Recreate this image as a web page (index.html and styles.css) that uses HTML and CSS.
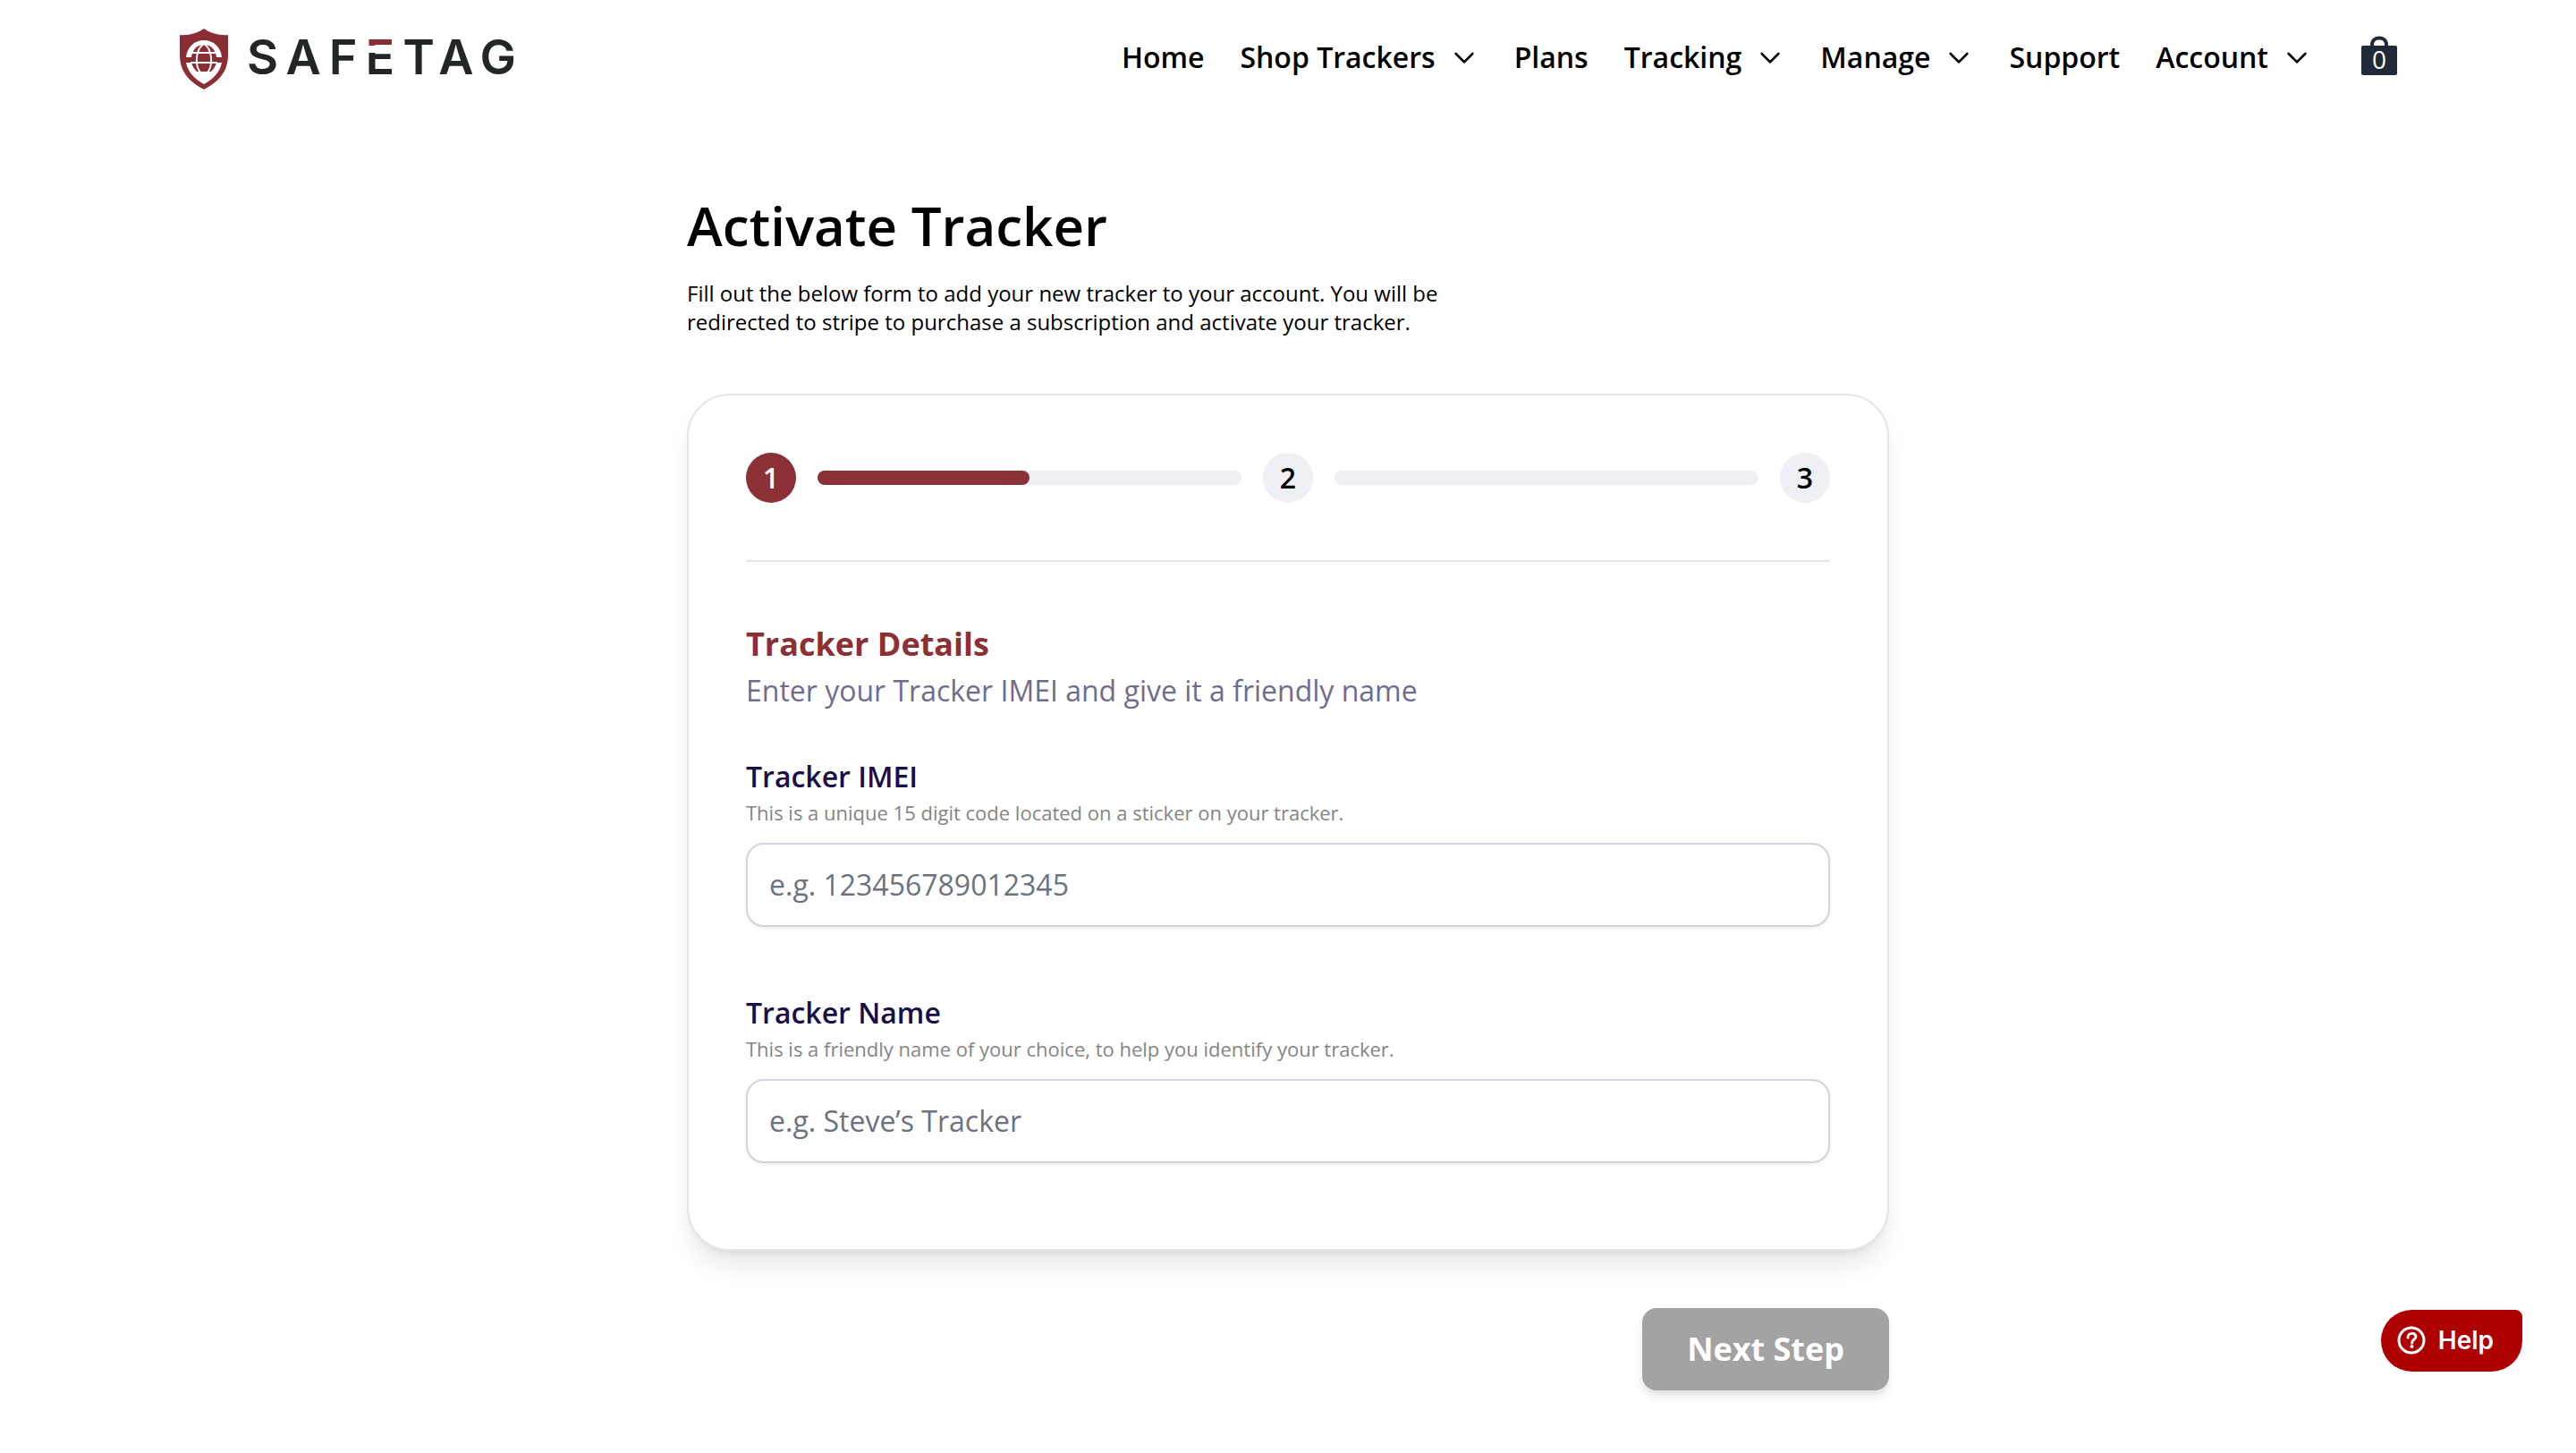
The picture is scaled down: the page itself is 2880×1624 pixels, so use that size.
FILE: index.html
```html
<!DOCTYPE html>
<html lang="en">
<head>
  <meta charset="utf-8">
  <meta name="viewport" content="width=device-width, initial-scale=1">
  <title>Activate Tracker | SafeTag</title>
  <link rel="stylesheet" href="styles.css">
</head>
<body>
  <header class="site-header">
    <a class="logo" href="/">
      <svg class="logo-mark" viewBox="0 0 54 72" aria-hidden="true">
        <path fill="#8b2e33" d="M27 4C20 9 9 12 0 11V33C0 52 10 63 27 72C44 63 54 52 54 33V11C45 12 34 9 27 4Z"/>
        <path fill="#fff" d="M7 36C8 25 16 17 27 17S46 25 47 36Z"/>
        <path fill="#fff" d="M7 42H47C45 52 38 60 27 66C16 60 9 52 7 42Z"/>
        <path fill="#8b2e33" d="M13 36C14 28 19 22 27 22S40 28 41 36V42C40 46 38 49 35 52H19C16 49 14 46 13 42Z"/>
        <path fill="none" stroke="#fff" stroke-width="2" d="M14 31H40M12 42H42M27 21C17 27 17 46 23 53M27 21C37 27 37 46 31 53"/>
      </svg>
      <span class="logo-text">SAF<span class="logo-accent">E</span>TAG</span>
    </a>
    <nav class="nav" aria-label="Main">
      <a class="nav-link" href="/">Home</a>
      <button class="nav-link" type="button">Shop Trackers<svg class="chevron" viewBox="0 0 24 24" aria-hidden="true"><path d="M19 9l-7 7-7-7"/></svg></button>
      <a class="nav-link" href="/plans">Plans</a>
      <button class="nav-link" type="button">Tracking<svg class="chevron" viewBox="0 0 24 24" aria-hidden="true"><path d="M19 9l-7 7-7-7"/></svg></button>
      <button class="nav-link" type="button">Manage<svg class="chevron" viewBox="0 0 24 24" aria-hidden="true"><path d="M19 9l-7 7-7-7"/></svg></button>
      <a class="nav-link" href="/support">Support</a>
      <button class="nav-link" type="button">Account<svg class="chevron" viewBox="0 0 24 24" aria-hidden="true"><path d="M19 9l-7 7-7-7"/></svg></button>
      <a class="cart" href="/cart" aria-label="Cart, 0 items">
        <svg class="cart-icon" viewBox="0 0 40 48" aria-hidden="true">
          <path fill="none" stroke="#1f2937" stroke-width="4" d="M12 14V10C12 0 28 0 28 10V14"/>
          <rect y="11" width="40" height="33" rx="2" fill="#1f2937"/>
        </svg>
        <span class="cart-count">0</span>
      </a>
    </nav>
  </header>

  <main class="page">
    <h1 class="page-title">Activate Tracker</h1>
    <p class="page-intro">Fill out the below form to add your new tracker to your account. You will be redirected to stripe to purchase a subscription and activate your tracker.</p>

    <form class="wizard">
      <section class="card">
        <div class="steps">
          <span class="step step-active">1</span>
          <span class="bar"><span class="bar-fill" style="width: 50%"></span></span>
          <span class="step">2</span>
          <span class="bar"></span>
          <span class="step">3</span>
        </div>
        <hr class="divider">
        <h2 class="section-title">Tracker Details</h2>
        <p class="section-intro">Enter your Tracker IMEI and give it a friendly name</p>
        <div class="fields">
          <div class="field">
            <label class="label" for="imei">Tracker IMEI</label>
            <p class="hint" id="imei-hint">This is a unique 15 digit code located on a sticker on your tracker.</p>
            <input class="input" id="imei" type="text" placeholder="e.g. 123456789012345" aria-describedby="imei-hint">
          </div>
          <div class="field">
            <label class="label" for="name">Tracker Name</label>
            <p class="hint" id="name-hint">This is a friendly name of your choice, to help you identify your tracker.</p>
            <input class="input" id="name" type="text" placeholder="e.g. Steve’s Tracker" aria-describedby="name-hint">
          </div>
        </div>
      </section>
      <button class="next" type="submit" disabled>Next Step</button>
    </form>
  </main>

  <button class="help" type="button">
    <svg class="help-icon" viewBox="0 0 32 32" aria-hidden="true">
      <g fill="none" stroke="#fff">
        <circle cx="16" cy="16" r="14" stroke-width="3"/>
        <path stroke-width="3" stroke-linecap="round" d="M12 13C12 7 21 7 21 12C21 15 16.500 15 16.500 19"/>
      </g>
      <circle cx="16.500" cy="23" r="2" fill="#fff"/>
    </svg>
    Help
  </button>
</body>
</html>
```
FILE: styles.css
```css
* {
  box-sizing: border-box;
}

body {
  margin: 0;
  background: #fff;
  color: #000;
  font-family: "Open Sans", "Noto Sans", sans-serif;
}

h1, h2, p {
  margin: 0;
}

button, input {
  font: inherit;
}

/* Header */
.site-header {
  display: flex;
  align-items: center;
  justify-content: space-between;
  min-height: 128px;
  padding: 0 200px;
}

.logo {
  display: flex;
  align-items: center;
  gap: 20px;
  color: #232626;
  text-decoration: none;
}

.logo-mark {
  width: 56px;
  height: 72px;
}

.logo-text {
  font-family: Inter, sans-serif;
  font-size: 54px;
  font-weight: 600;
  line-height: 72px;
  letter-spacing: 9px;
}

.logo-accent {
  background: linear-gradient(#8b2e33 0 20px, transparent 20px 28px, #232626 28px);
  background-clip: text;
  -webkit-background-clip: text;
  color: transparent;
}

.nav {
  display: flex;
  align-items: center;
  gap: 40px;
}

.nav-link {
  display: flex;
  align-items: center;
  gap: 16px;
  padding: 0;
  border: 0;
  background: none;
  color: #000;
  font-size: 32px;
  font-weight: 600;
  line-height: 48px;
  text-decoration: none;
}

.chevron {
  width: 32px;
  height: 32px;
  fill: none;
  stroke: currentColor;
  stroke-width: 2;
  stroke-linecap: round;
  stroke-linejoin: round;
}

.cart {
  display: grid;
  place-items: center;
  margin-left: 16px;
  color: #fff;
  font-size: 28px;
  line-height: 36px;
  text-decoration: none;
}

.cart-icon,
.cart-count {
  grid-area: 1 / 1;
}

.cart-icon {
  width: 40px;
  height: 48px;
}

.cart-count {
  padding-top: 4px;
}

/* Page */
.page {
  max-width: 1344px;
  margin: 0 auto;
  padding: 88px 0 64px;
}

.page-title {
  font-size: 60px;
  font-weight: 600;
  line-height: 72px;
}

.page-intro {
  max-width: 896px;
  margin-top: 24px;
  font-size: 24px;
  line-height: 32px;
}

.wizard {
  display: flex;
  flex-direction: column;
  gap: 64px;
  margin-top: 64px;
}

.card {
  padding: 64px 64px 96px;
  border: 2px solid #e5e5e5;
  border-radius: 48px;
  background: #fff;
  box-shadow: 0 20px 30px -6px rgb(0 0 0 / 10%), 0 8px 12px -8px rgb(0 0 0 / 10%);
}

.steps {
  display: flex;
  align-items: center;
  gap: 24px;
}

.step {
  display: grid;
  place-items: center;
  width: 56px;
  height: 56px;
  border-radius: 50%;
  background: #eff0f6;
  font-size: 32px;
  font-weight: 600;
  line-height: 56px;
}

.step-active {
  background: #8b3034;
  color: #fff;
}

.bar {
  flex: 1;
  height: 16px;
  border-radius: 8px;
  background: #eff0f6;
}

.bar-fill {
  display: block;
  height: 100%;
  border-radius: 8px;
  background: #8b3034;
}

.divider {
  height: 2px;
  margin: 64px 0;
  border: 0;
  background: #e5e5e5;
}

.section-title {
  color: #8b3034;
  font-size: 36px;
  font-weight: 700;
  line-height: 56px;
}

.section-intro {
  color: #6f6c8f;
  font-size: 32px;
  line-height: 48px;
}

.fields {
  display: flex;
  flex-direction: column;
  gap: 70px;
  margin-top: 46px;
}

.field {
  display: flex;
  flex-direction: column;
}

.label {
  color: #170f49;
  font-size: 32px;
  font-weight: 600;
  line-height: 52px;
}

.hint {
  color: #858585;
  font-size: 22px;
  line-height: 28px;
}

.input {
  width: 100%;
  margin-top: 20px;
  padding: 22px 24px;
  border: 2px solid #d1d5db;
  border-radius: 20px;
  background: #fff;
  box-shadow: 0 2px 4px rgb(0 0 0 / 5%);
  font-size: 32px;
  line-height: 46px;
}

.input::placeholder {
  color: #6b7280;
}

.next {
  align-self: flex-end;
  padding: 20px 50px;
  border: 0;
  border-radius: 16px;
  background: #a3a3a3;
  box-shadow: 0 8px 12px -2px rgb(0 0 0 / 10%), 0 4px 8px -4px rgb(0 0 0 / 10%);
  color: #fff;
  font-size: 36px;
  font-weight: 700;
  line-height: 52px;
}

/* Floating help launcher */
.help {
  position: fixed;
  right: 60px;
  bottom: 91px;
  display: flex;
  align-items: center;
  gap: 14px;
  padding: 16px 32px 17px 18px;
  border: 0;
  border-radius: 35px 8px 35px 35px;
  background: #af0000;
  color: #fff;
  font-family: Inter, sans-serif;
  font-size: 28px;
  font-weight: 600;
  line-height: 36px;
}

.help-icon {
  width: 32px;
  height: 32px;
}
```
